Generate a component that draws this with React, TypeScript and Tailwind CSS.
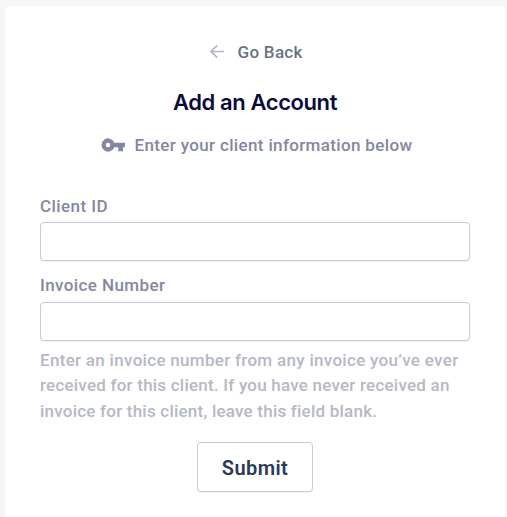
import { useState } from 'react'

const fields = [
  { id: 'client-id', label: 'Client ID', spacing: 'gap-[4px]', tracking: 'tracking-[0.42px]' },
  { id: 'invoice-number', label: 'Invoice Number', spacing: 'gap-[5px]', tracking: 'tracking-[0.4px]' },
]

const helpLines = [
  { text: 'Enter an invoice number from any invoice you’ve ever', tracking: 'tracking-[0.3px]' },
  { text: 'received for this client. If you have never received an', tracking: 'tracking-[0.22px]' },
  { text: 'invoice for this client, leave this field blank.', tracking: 'tracking-[0.22px]' },
]

function ArrowIcon() {
  return (
    <svg width="14" height="14" viewBox="0 0 14 14" fill="none" stroke="#b3b5c6" strokeWidth="1.7" aria-hidden="true">
      <path d="M14 6.5H1M7.3 0.4L1 6.5L7.3 12.6" />
    </svg>
  )
}

function KeyIcon() {
  return (
    <svg width="24" height="14" viewBox="0 0 24 14" fill="#8487a1" aria-hidden="true">
      <path
        fillRule="evenodd"
        d="M13.3 4.7A6.6 6.6 0 1 0 13.3 9.3H17.2V13.3H22V9.3H24V4.7ZM7 9.3A2.3 2.3 0 1 1 7 4.7A2.3 2.3 0 0 1 7 9.3Z"
      />
    </svg>
  )
}

export default function App() {
  const [values, setValues] = useState<Record<string, string>>({})

  return (
    <main className="h-[517px] w-[507px] overflow-hidden bg-[#f5f6f8] pt-[6px] pr-[2px] pl-[5px] font-['Roboto',sans-serif] text-[17px] font-medium">
      <form
        className="flex h-[530px] flex-col rounded-[5px] bg-white px-[35px] pt-[33px]"
        onSubmit={(e) => e.preventDefault()}
      >
        <a href="#" className="flex h-[26px] items-center gap-[13.5px] pl-[170px] text-[#697386]">
          <ArrowIcon />
          <span className="pt-[2px] tracking-[0.3px]">Go Back</span>
        </a>

        <h1 className="mt-[22px] text-center font-['Inter',sans-serif] text-[22px] leading-[30px] font-semibold tracking-[-0.4px] text-[#0a0b3b]">
          Add an Account
        </h1>

        <div className="mt-[15px] flex h-[26px] items-center gap-[9.5px] pl-[61px] whitespace-nowrap text-[#8487a1]">
          <KeyIcon />
          <span className="pt-[2px] tracking-[0.35px]">Enter your client information below</span>
        </div>

        <div className="mt-[35px] flex flex-col gap-[11px]">
          {fields.map((field) => (
            <div key={field.id} className={`flex flex-col ${field.spacing}`}>
              <label htmlFor={field.id} className={`h-[25px] leading-[26px] text-[#8487a1] ${field.tracking}`}>
                {field.label}
              </label>
              <input
                id={field.id}
                value={values[field.id] ?? ''}
                onChange={(e) => setValues({ ...values, [field.id]: e.target.value })}
                className="h-[39px] rounded-[4px] border border-[#c9cad6] bg-white px-3 shadow-[0_1px_1px_rgba(20,20,60,0.05)]"
              />
            </div>
          ))}
        </div>

        <div className="mt-[6.5px] leading-[25.5px] whitespace-nowrap text-[#b5b8c6]">
          {helpLines.map((line) => (
            <p key={line.text} className={line.tracking}>
              {line.text}
            </p>
          ))}
        </div>

        <button
          type="submit"
          className="mt-[18px] h-[50px] w-[116px] self-center rounded-[4px] border border-[#c9cad6] bg-white pt-[2px] text-[20px] font-semibold tracking-[0.4px] text-[#2a3a55] shadow-[0_1px_1px_rgba(20,20,60,0.05)]"
        >
          Submit
        </button>
      </form>
    </main>
  )
}
